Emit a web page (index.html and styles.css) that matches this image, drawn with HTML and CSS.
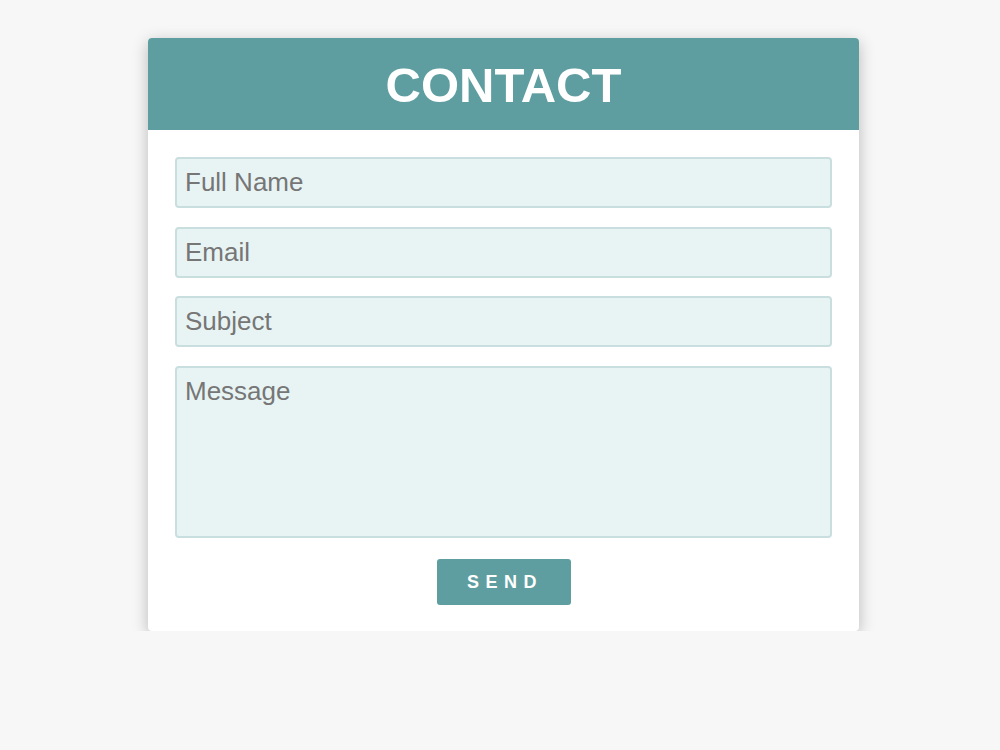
FILE: index.html
```html
<!DOCTYPE html>
<html lang="en">
<head>
<meta charset="utf-8">
<title>Contact</title>
<link rel="stylesheet" href="styles.css">
</head>
<body>
  <section class="card">
    <header class="card-head">
      <h1>CONTACT</h1>
    </header>
    <form class="form">
      <input class="field" type="text" placeholder="Full Name">
      <input class="field" type="email" placeholder="Email">
      <input class="field" type="text" placeholder="Subject">
      <textarea class="field area" placeholder="Message"></textarea>
      <button class="send" type="button">SEND</button>
    </form>
  </section>
</body>
</html>
```
FILE: styles.css
```css
html, body {
  margin: 0;
  padding: 0;
  background: #f7f7f7;
  font-family: "Liberation Sans", Arial, sans-serif;
}

body {
  padding-top: 38px;
}

.card {
  width: 711px;
  margin-left: 148px;
  background: #fff;
  border-radius: 4px;
  overflow: hidden;
  box-shadow: 0 4px 16px rgba(0, 0, 0, 0.25);
}

.card-head {
  background: #5f9ea0;
  height: 92px;
  display: flex;
  align-items: center;
  justify-content: center;
}

.card-head h1 {
  margin: 0;
  color: #fff;
  font-size: 49px;
  font-weight: bold;
  line-height: 1;
  padding-top: 2px;
}

.form {
  display: flex;
  flex-direction: column;
  align-items: center;
  padding: 27px 27px 26px;
  gap: 18.5px;
}

.field {
  box-sizing: border-box;
  width: 100%;
  height: 51px;
  margin: 0;
  padding: 0 8px;
  background: #e8f4f4;
  border: 2px solid #c9dede;
  border-radius: 4px;
  font-family: "Liberation Sans", Arial, sans-serif;
  font-size: 26px;
  color: #333;
  outline: none;
}

.field::placeholder {
  color: #767676;
}

.area {
  height: 172px;
  padding-top: 8px;
  resize: none;
  display: block;
}

.send {
  margin-top: 3px;
  width: 134px;
  height: 46px;
  border: none;
  border-radius: 3px;
  background: #5f9ea0;
  color: #fff;
  font-family: "Liberation Sans", Arial, sans-serif;
  font-size: 18px;
  font-weight: bold;
  letter-spacing: 6.5px;
  text-indent: 3px;
  cursor: pointer;
}
```
